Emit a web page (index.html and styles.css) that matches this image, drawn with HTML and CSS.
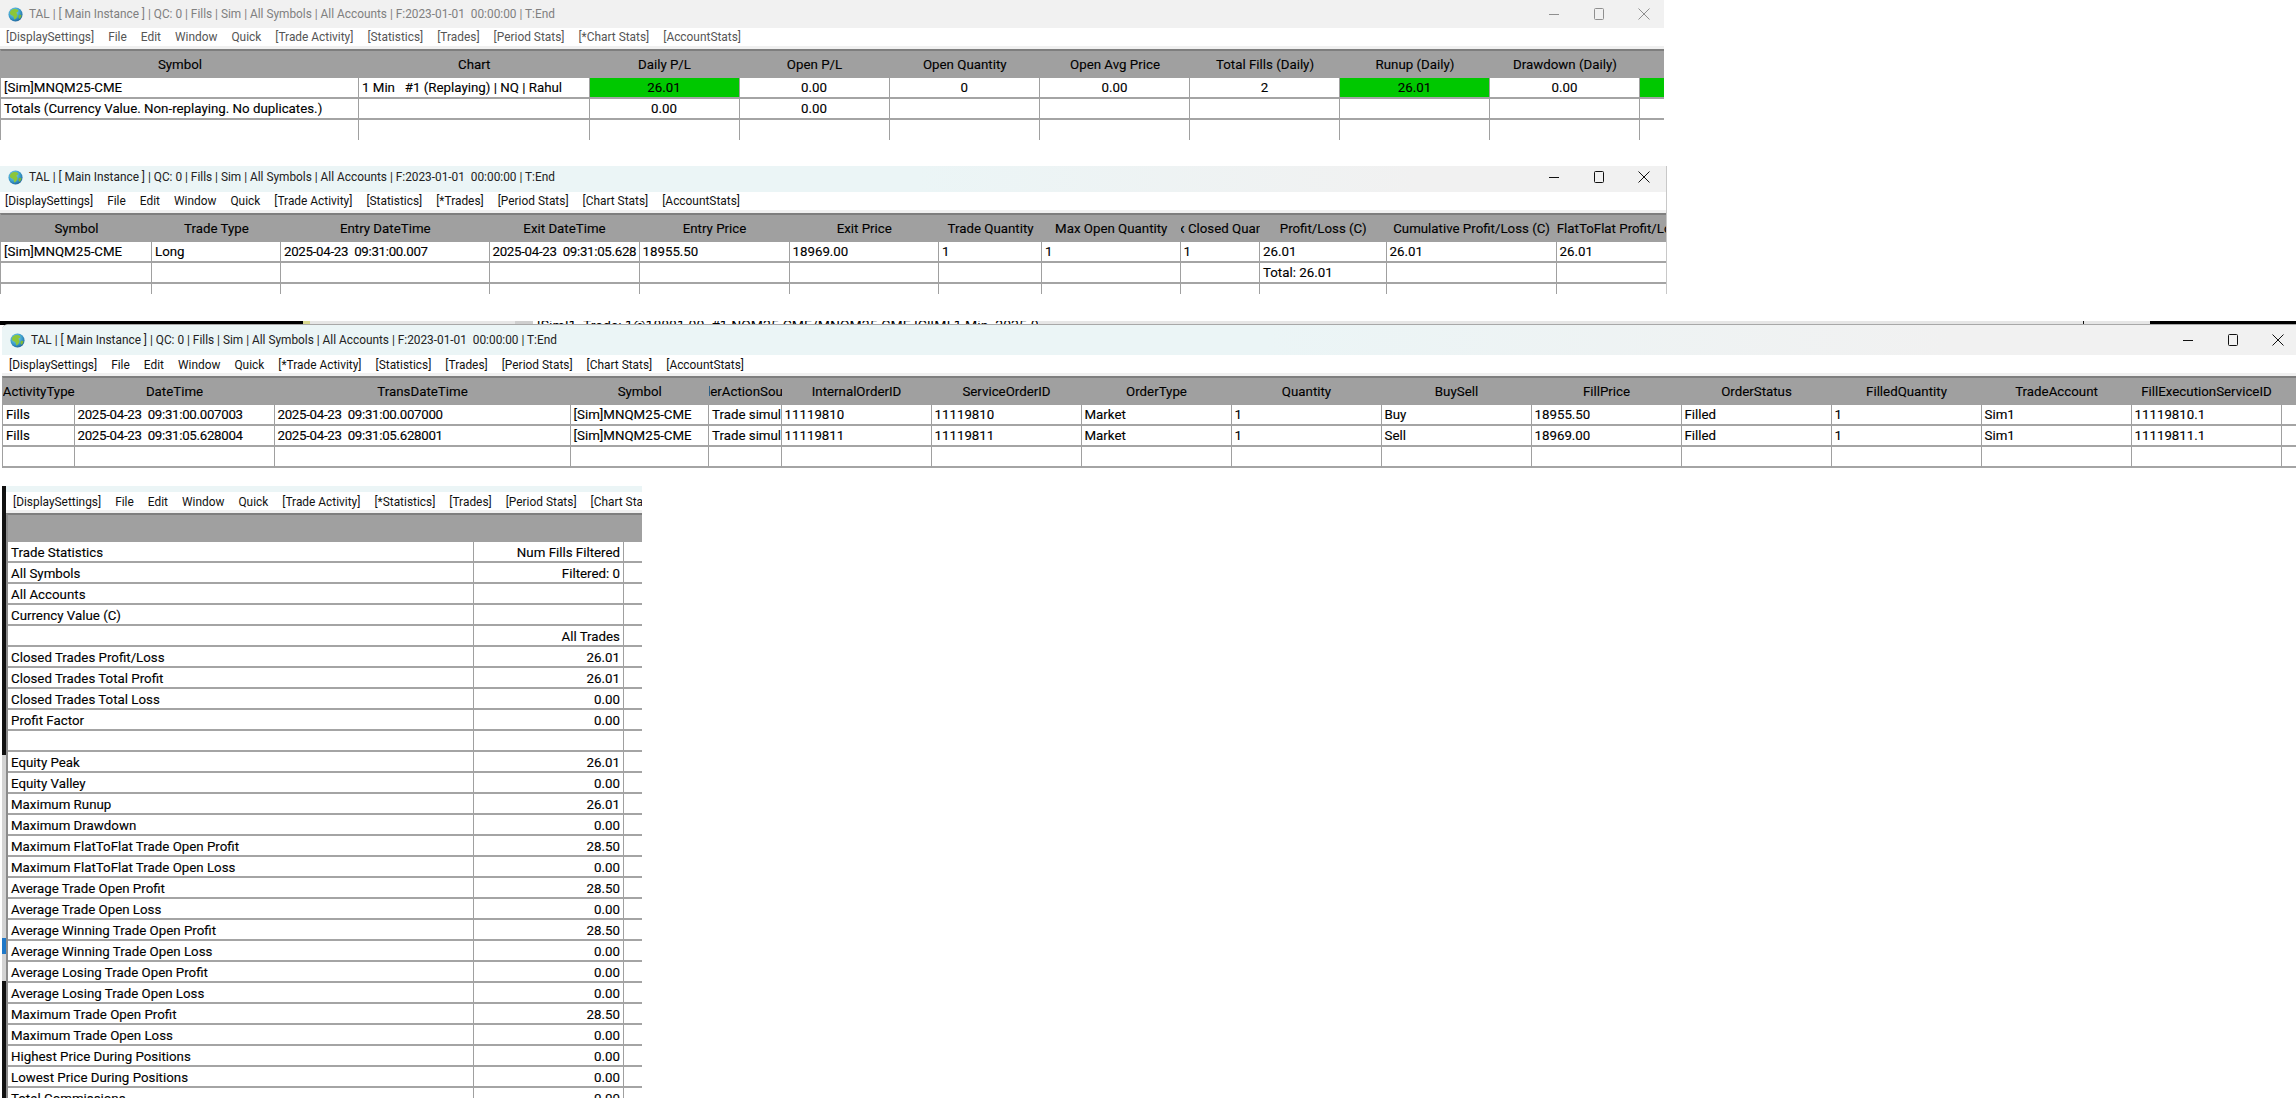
FILE: index.html
```html
<!DOCTYPE html>
<html lang="en">
<head>
<meta charset="utf-8">
<title>TAL</title>
<link rel="stylesheet" href="styles.css">
</head>
<body>
<svg class="defs" width="0" height="0" aria-hidden="true">
  <defs>
    <radialGradient id="sea" cx="40%" cy="35%" r="70%">
      <stop offset="0" stop-color="#8fd6e8"/><stop offset=".6" stop-color="#3b9fce"/><stop offset="1" stop-color="#1d5f96"/>
    </radialGradient>
    <symbol id="globe" viewBox="0 0 16 16">
      <circle cx="8" cy="8" r="7.500" fill="url(#sea)"/>
      <path d="M3.500 3.400c2-1.600 5.400-1.800 7.200-.2 1 1-.3 2.300-1.500 2.300-.6 1.500 1.500 2 .9 3.700-.5 1.700-1.700 3.500-3.300 4-.8-1.700-.5-3.300-1.800-3.900C3.400 8.600 1.900 7.800 2 6c.3-1 .8-2 1.500-2.600z" fill="#8cc63a"/>
      <path d="M11.500 8.500c1-.5 2.300-.3 2.900.2-.2 1.500-1 3-2.400 3.800-.9-.9-1-2.900-.5-4z" fill="#7fb936"/>
    </symbol>
    <symbol id="wmin" viewBox="0 0 12 12"><path d="M1 6.500h10" fill="none" stroke="currentColor"/></symbol>
    <symbol id="wmax" viewBox="0 0 12 12"><rect x="1.500" y=".5" width="9" height="11" rx="1" fill="none" stroke="currentColor"/></symbol>
    <symbol id="wclose" viewBox="0 0 12 12"><path d="M.5.500l11 11M11.500.500l-11 11" fill="none" stroke="currentColor"/></symbol>
  </defs>
</svg>

<main class="desktop">

  <section class="win win-fills">
    <header class="titlebar">
      <svg class="globe"><use href="#globe"/></svg>
      <span class="title">TAL | [ Main Instance ] | QC: 0 | Fills | Sim | All Symbols | All Accounts | F:2023-01-01&nbsp; 00:00:00 | T:End</span>
      <div class="controls"><svg class="ctl"><use href="#wmin"/></svg><svg class="ctl"><use href="#wmax"/></svg><svg class="ctl"><use href="#wclose"/></svg></div>
    </header>
    <nav class="menu">
      <span>[DisplaySettings]</span><span>File</span><span>Edit</span><span>Window</span><span>Quick</span><span>[Trade Activity]</span><span>[Statistics]</span><span>[Trades]</span><span>[Period Stats]</span><span>[*Chart Stats]</span><span>[AccountStats]</span>
    </nav>
    <div class="grid cols-positions">
      <div class="cell hd"><span>Symbol</span></div><div class="cell hd"><span>Chart</span></div><div class="cell hd"><span>Daily P/L</span></div><div class="cell hd"><span>Open P/L</span></div><div class="cell hd"><span>Open Quantity</span></div><div class="cell hd"><span>Open Avg Price</span></div><div class="cell hd"><span>Total Fills (Daily)</span></div><div class="cell hd"><span>Runup (Daily)</span></div><div class="cell hd"><span>Drawdown (Daily)</span></div><div class="cell hd"></div>
      <div class="cell">[Sim]MNQM25-CME</div><div class="cell">1 Min&nbsp; &nbsp;#1 (Replaying) | NQ | Rahul</div><div class="cell mid green">26.01</div><div class="cell mid">0.00</div><div class="cell mid">0</div><div class="cell mid">0.00</div><div class="cell mid">2</div><div class="cell mid green">26.01</div><div class="cell mid">0.00</div><div class="cell green"></div>
      <div class="cell">Totals (Currency Value. Non-replaying. No duplicates.)</div><div class="cell"></div><div class="cell mid">0.00</div><div class="cell mid">0.00</div><div class="cell"></div><div class="cell"></div><div class="cell"></div><div class="cell"></div><div class="cell"></div><div class="cell"></div>
      <div class="cell open"></div><div class="cell open"></div><div class="cell open"></div><div class="cell open"></div><div class="cell open"></div><div class="cell open"></div><div class="cell open"></div><div class="cell open"></div><div class="cell open"></div><div class="cell open"></div>
    </div>
  </section>

  <section class="win win-trades">
    <header class="titlebar active">
      <svg class="globe"><use href="#globe"/></svg>
      <span class="title">TAL | [ Main Instance ] | QC: 0 | Fills | Sim | All Symbols | All Accounts | F:2023-01-01&nbsp; 00:00:00 | T:End</span>
      <div class="controls"><svg class="ctl"><use href="#wmin"/></svg><svg class="ctl"><use href="#wmax"/></svg><svg class="ctl"><use href="#wclose"/></svg></div>
    </header>
    <nav class="menu">
      <span>[DisplaySettings]</span><span>File</span><span>Edit</span><span>Window</span><span>Quick</span><span>[Trade Activity]</span><span>[Statistics]</span><span>[*Trades]</span><span>[Period Stats]</span><span>[Chart Stats]</span><span>[AccountStats]</span>
    </nav>
    <div class="grid cols-trades">
      <div class="cell hd"><span>Symbol</span></div><div class="cell hd"><span>Trade Type</span></div><div class="cell hd"><span>Entry DateTime</span></div><div class="cell hd"><span>Exit DateTime</span></div><div class="cell hd"><span>Entry Price</span></div><div class="cell hd"><span>Exit Price</span></div><div class="cell hd"><span>Trade Quantity</span></div><div class="cell hd"><span>Max Open Quantity</span></div><div class="cell hd"><span>Max Closed Quantity</span></div><div class="cell hd"><span>Profit/Loss (C)</span></div><div class="cell hd"><span>Cumulative Profit/Loss (C)</span></div><div class="cell hd"><span>FlatToFlat Profit/Loss (C)</span></div>
      <div class="cell">[Sim]MNQM25-CME</div><div class="cell">Long</div><div class="cell ts">2025-04-23&nbsp; 09:31:00.007</div><div class="cell ts">2025-04-23&nbsp; 09:31:05.628</div><div class="cell">18955.50</div><div class="cell">18969.00</div><div class="cell">1</div><div class="cell">1</div><div class="cell">1</div><div class="cell">26.01</div><div class="cell">26.01</div><div class="cell">26.01</div>
      <div class="cell"></div><div class="cell"></div><div class="cell"></div><div class="cell"></div><div class="cell"></div><div class="cell"></div><div class="cell"></div><div class="cell"></div><div class="cell"></div><div class="cell">Total: 26.01</div><div class="cell"></div><div class="cell"></div>
      <div class="cell open"></div><div class="cell open"></div><div class="cell open"></div><div class="cell open"></div><div class="cell open"></div><div class="cell open"></div><div class="cell open"></div><div class="cell open"></div><div class="cell open"></div><div class="cell open"></div><div class="cell open"></div><div class="cell open"></div>
    </div>
  </section>

  <div class="behind">
    <i class="seg seg-black"></i><i class="seg seg-yellow"></i><i class="seg seg-light"></i><i class="seg seg-dim"></i>
    <span class="behind-text">[Sim]1&nbsp; Trade: 1@18881.00&nbsp; #1 NQM25-CME/MNQM25-CME [C][M] 1 Min&nbsp; 2025-04-22</span>
    <i class="seg seg-rest"></i><i class="seg seg-tick"></i><i class="seg seg-rest2"></i><i class="seg seg-black2"></i>
  </div>

  <section class="win win-activity">
    <header class="titlebar active">
      <svg class="globe"><use href="#globe"/></svg>
      <span class="title">TAL | [ Main Instance ] | QC: 0 | Fills | Sim | All Symbols | All Accounts | F:2023-01-01&nbsp; 00:00:00 | T:End</span>
      <div class="controls"><svg class="ctl"><use href="#wmin"/></svg><svg class="ctl"><use href="#wmax"/></svg><svg class="ctl"><use href="#wclose"/></svg></div>
    </header>
    <nav class="menu">
      <span>[DisplaySettings]</span><span>File</span><span>Edit</span><span>Window</span><span>Quick</span><span>[*Trade Activity]</span><span>[Statistics]</span><span>[Trades]</span><span>[Period Stats]</span><span>[Chart Stats]</span><span>[AccountStats]</span>
    </nav>
    <div class="grid cols-activity">
      <div class="cell hd"><span>ActivityType</span></div><div class="cell hd"><span>DateTime</span></div><div class="cell hd"><span>TransDateTime</span></div><div class="cell hd"><span>Symbol</span></div><div class="cell hd"><span>OrderActionSource</span></div><div class="cell hd"><span>InternalOrderID</span></div><div class="cell hd"><span>ServiceOrderID</span></div><div class="cell hd"><span>OrderType</span></div><div class="cell hd"><span>Quantity</span></div><div class="cell hd"><span>BuySell</span></div><div class="cell hd"><span>FillPrice</span></div><div class="cell hd"><span>OrderStatus</span></div><div class="cell hd"><span>FilledQuantity</span></div><div class="cell hd"><span>TradeAccount</span></div><div class="cell hd"><span>FillExecutionServiceID</span></div><div class="cell hd"></div>
      <div class="cell">Fills</div><div class="cell ts">2025-04-23&nbsp; 09:31:00.007003</div><div class="cell ts">2025-04-23&nbsp; 09:31:00.007000</div><div class="cell">[Sim]MNQM25-CME</div><div class="cell">Trade simulation</div><div class="cell">11119810</div><div class="cell">11119810</div><div class="cell">Market</div><div class="cell">1</div><div class="cell">Buy</div><div class="cell">18955.50</div><div class="cell">Filled</div><div class="cell">1</div><div class="cell">Sim1</div><div class="cell">11119810.1</div><div class="cell"></div>
      <div class="cell">Fills</div><div class="cell ts">2025-04-23&nbsp; 09:31:05.628004</div><div class="cell ts">2025-04-23&nbsp; 09:31:05.628001</div><div class="cell">[Sim]MNQM25-CME</div><div class="cell">Trade simulation</div><div class="cell">11119811</div><div class="cell">11119811</div><div class="cell">Market</div><div class="cell">1</div><div class="cell">Sell</div><div class="cell">18969.00</div><div class="cell">Filled</div><div class="cell">1</div><div class="cell">Sim1</div><div class="cell">11119811.1</div><div class="cell"></div>
      <div class="cell"></div><div class="cell"></div><div class="cell"></div><div class="cell"></div><div class="cell"></div><div class="cell"></div><div class="cell"></div><div class="cell"></div><div class="cell"></div><div class="cell"></div><div class="cell"></div><div class="cell"></div><div class="cell"></div><div class="cell"></div><div class="cell"></div><div class="cell"></div>
    </div>
  </section>

  <div class="strip">
    <i class="strip-black"></i><i class="strip-grey"></i><i class="strip-blue"></i><i class="strip-grey2"></i><i class="strip-black2"></i>
  </div>

  <section class="win win-stats">
    <div class="titlebar-edge"></div>
    <nav class="menu">
      <span>[DisplaySettings]</span><span>File</span><span>Edit</span><span>Window</span><span>Quick</span><span>[Trade Activity]</span><span>[*Statistics]</span><span>[Trades]</span><span>[Period Stats]</span><span>[Chart Stats]</span><span>[AccountStats]</span>
    </nav>
    <div class="grid cols-stats">
      <div class="cell hd"></div><div class="cell hd"></div><div class="cell hd"></div>
      <div class="cell">Trade Statistics</div><div class="cell end">Num Fills Filtered</div><div class="cell"></div>
      <div class="cell">All Symbols</div><div class="cell end">Filtered: 0</div><div class="cell"></div>
      <div class="cell">All Accounts</div><div class="cell end"></div><div class="cell"></div>
      <div class="cell">Currency Value (C)</div><div class="cell end"></div><div class="cell"></div>
      <div class="cell"></div><div class="cell end">All Trades</div><div class="cell"></div>
      <div class="cell">Closed Trades Profit/Loss</div><div class="cell end">26.01</div><div class="cell"></div>
      <div class="cell">Closed Trades Total Profit</div><div class="cell end">26.01</div><div class="cell"></div>
      <div class="cell">Closed Trades Total Loss</div><div class="cell end">0.00</div><div class="cell"></div>
      <div class="cell">Profit Factor</div><div class="cell end">0.00</div><div class="cell"></div>
      <div class="cell"></div><div class="cell end"></div><div class="cell"></div>
      <div class="cell">Equity Peak</div><div class="cell end">26.01</div><div class="cell"></div>
      <div class="cell">Equity Valley</div><div class="cell end">0.00</div><div class="cell"></div>
      <div class="cell">Maximum Runup</div><div class="cell end">26.01</div><div class="cell"></div>
      <div class="cell">Maximum Drawdown</div><div class="cell end">0.00</div><div class="cell"></div>
      <div class="cell">Maximum FlatToFlat Trade Open Profit</div><div class="cell end">28.50</div><div class="cell"></div>
      <div class="cell">Maximum FlatToFlat Trade Open Loss</div><div class="cell end">0.00</div><div class="cell"></div>
      <div class="cell">Average Trade Open Profit</div><div class="cell end">28.50</div><div class="cell"></div>
      <div class="cell">Average Trade Open Loss</div><div class="cell end">0.00</div><div class="cell"></div>
      <div class="cell">Average Winning Trade Open Profit</div><div class="cell end">28.50</div><div class="cell"></div>
      <div class="cell">Average Winning Trade Open Loss</div><div class="cell end">0.00</div><div class="cell"></div>
      <div class="cell">Average Losing Trade Open Profit</div><div class="cell end">0.00</div><div class="cell"></div>
      <div class="cell">Average Losing Trade Open Loss</div><div class="cell end">0.00</div><div class="cell"></div>
      <div class="cell">Maximum Trade Open Profit</div><div class="cell end">28.50</div><div class="cell"></div>
      <div class="cell">Maximum Trade Open Loss</div><div class="cell end">0.00</div><div class="cell"></div>
      <div class="cell">Highest Price During Positions</div><div class="cell end">0.00</div><div class="cell"></div>
      <div class="cell">Lowest Price During Positions</div><div class="cell end">0.00</div><div class="cell"></div>
      <div class="cell">Total Commissions</div><div class="cell end">0.00</div><div class="cell"></div>
    </div>
  </section>

</main>
</body>
</html>
```

FILE: styles.css
```css
* { box-sizing: border-box; }
html, body { margin: 0; padding: 0; height: 100%; background: #fff; overflow: hidden; }
body { font-family: Roboto, "Liberation Sans", sans-serif; font-size: 13.3px; color: #000; }
.defs { position: absolute; }

.desktop { position: relative; width: 2296px; height: 1098px; overflow: hidden; background: #fff; }

.win { position: absolute; overflow: hidden; background: #fff; display: flex; flex-direction: column; }
.win-fills { left: 0; top: 0; width: 1664px; height: 140px; }
.win-trades { left: 0; top: 166px; width: 1667px; height: 128px; border-right: 1px solid #c8c8c8; }
.win-activity { left: 2px; top: 324px; width: 2294px; height: 144px; border-top: 1px solid #a8a8a8; border-top-left-radius: 6px; }
.win-stats { left: 6px; top: 486px; width: 636px; height: 612px; }

.titlebar { flex: none; height: 28px; display: flex; align-items: center; background: #f1f1f1; color: #808080; padding-left: 8px; font-size: 11.850px; }
.titlebar.active { height: 26px; padding-bottom: 4px; color: #222; background: linear-gradient(90deg, #ebf5f6 0%, #ebf5f6 55%, #f1f1f1 85%); }
.win-activity .titlebar { height: 30px; padding: 0 0 0 8px; }
.titlebar-edge { flex: none; height: 6px; background: #ebf5f6; }
.globe { flex: none; width: 15px; height: 15px; margin-right: 6px; }
.title { white-space: pre; }
.controls { margin-left: auto; display: flex; align-items: center; gap: 33px; padding-right: 14px; }
.win-trades .controls { padding-right: 16px; }
.win-activity .controls { gap: 33px; padding-right: 12px; }
.ctl { width: 12px; height: 12px; display: block; color: #111; }
.win-fills .ctl { color: #8f8f8f; }

.menu { flex: none; height: 18px; display: flex; align-items: center; gap: 14px; padding-left: 6px; white-space: nowrap; color: #111; font-size: 11.900px; }
.win-fills .menu { color: #555; }
.win-trades .menu { padding-left: 5px; }
.win-activity .menu { height: 20px; padding-left: 7px; }
.win-stats .menu { height: 20px; padding-left: 7px; }

.grid { flex: none; display: grid; grid-template-rows: 27px; grid-auto-rows: 21px; margin-top: 3px; border-top: 2px solid #7e7e7e; box-shadow: 0 -3px 0 #f0f0f0; -webkit-text-stroke: .12px #000; }
.win-trades .grid { margin-top: 3px; }
.win-activity .grid { margin-top: 1px; }
.win-stats .grid { margin-top: 1px; }
.cols-positions { grid-template-columns: 358px 230.500px 150px 150px 150.500px 150px 150px 150px 150px 150px; border-left: 1px solid #a0a0a0; width: 1788px; }
.cols-trades { grid-template-columns: 151px 129px 208.500px 150px 150px 149.500px 103px 138.500px 79.500px 126.500px 170px 150px; width: 1706px; border-left: 1px solid #a0a0a0; }
.cols-activity { grid-template-columns: 71.500px 200px 296px 138.500px 72.500px 150px 150px 150px 150px 150px 150px 150px 150px 150px 150px 150px; width: 2380px; border-left: 1px solid #a0a0a0; }
.cols-stats { grid-template-columns: 466px 150px 30px; width: 646px; border-left: 2px solid #8c8c8c; margin-left: 0; }

.cell { display: flex; align-items: center; min-width: 0; overflow: hidden; white-space: nowrap; padding-left: 3px; border-right: 1px solid #a0a0a0; border-bottom: 2px solid #a4a4a4; }
.cell.ts { letter-spacing: -.3px; }
.cell.open { border-bottom: 0; }
.cell.mid { justify-content: center; padding-left: 0; }
.cell.end { justify-content: flex-end; padding: 0 3px 0 0; }
.cell.green { background: #00c800; }
.cell.hd { background: #a0a0a0; justify-content: center; padding: 0; border-bottom: 0; border-right: 0; }
.cols-stats .cell:not(.hd) { padding-top: 1px; }

.behind { position: absolute; left: 0; top: 321px; width: 2296px; height: 4px; overflow: hidden; display: flex; background: #fff; }
.seg { display: block; flex: none; height: 4px; }
.seg-black { width: 303px; background: #000; }
.seg-yellow { width: 7px; background: #d9d98f; }
.seg-light { width: 205px; background: #e6e6e6; }
.seg-dim { width: 18px; background: #cfcfcf; }
.seg-rest { flex: 1; background: #e6e6e6; }
.seg-tick { width: 1px; background: #111; }
.seg-rest2 { width: 66px; background: #e6e6e6; }
.seg-black2 { width: 146px; background: #000; }
.behind-text { flex: none; width: 505px; padding-left: 4px; font-size: 14px; line-height: 11px; white-space: pre; color: #000; overflow: hidden; background: #fff; }

.strip { position: absolute; left: 2px; top: 486px; width: 4px; height: 612px; display: flex; flex-direction: column; }
.strip i { display: block; flex: none; }
.strip-black { height: 269px; background: #111; }
.strip-grey { height: 183px; background: #d4d4d4; }
.strip-blue { height: 16px; background: #1f78c8; }
.strip-grey2 { height: 27px; background: #d4d4d4; }
.strip-black2 { flex: 1 !important; background: #111; }
```
